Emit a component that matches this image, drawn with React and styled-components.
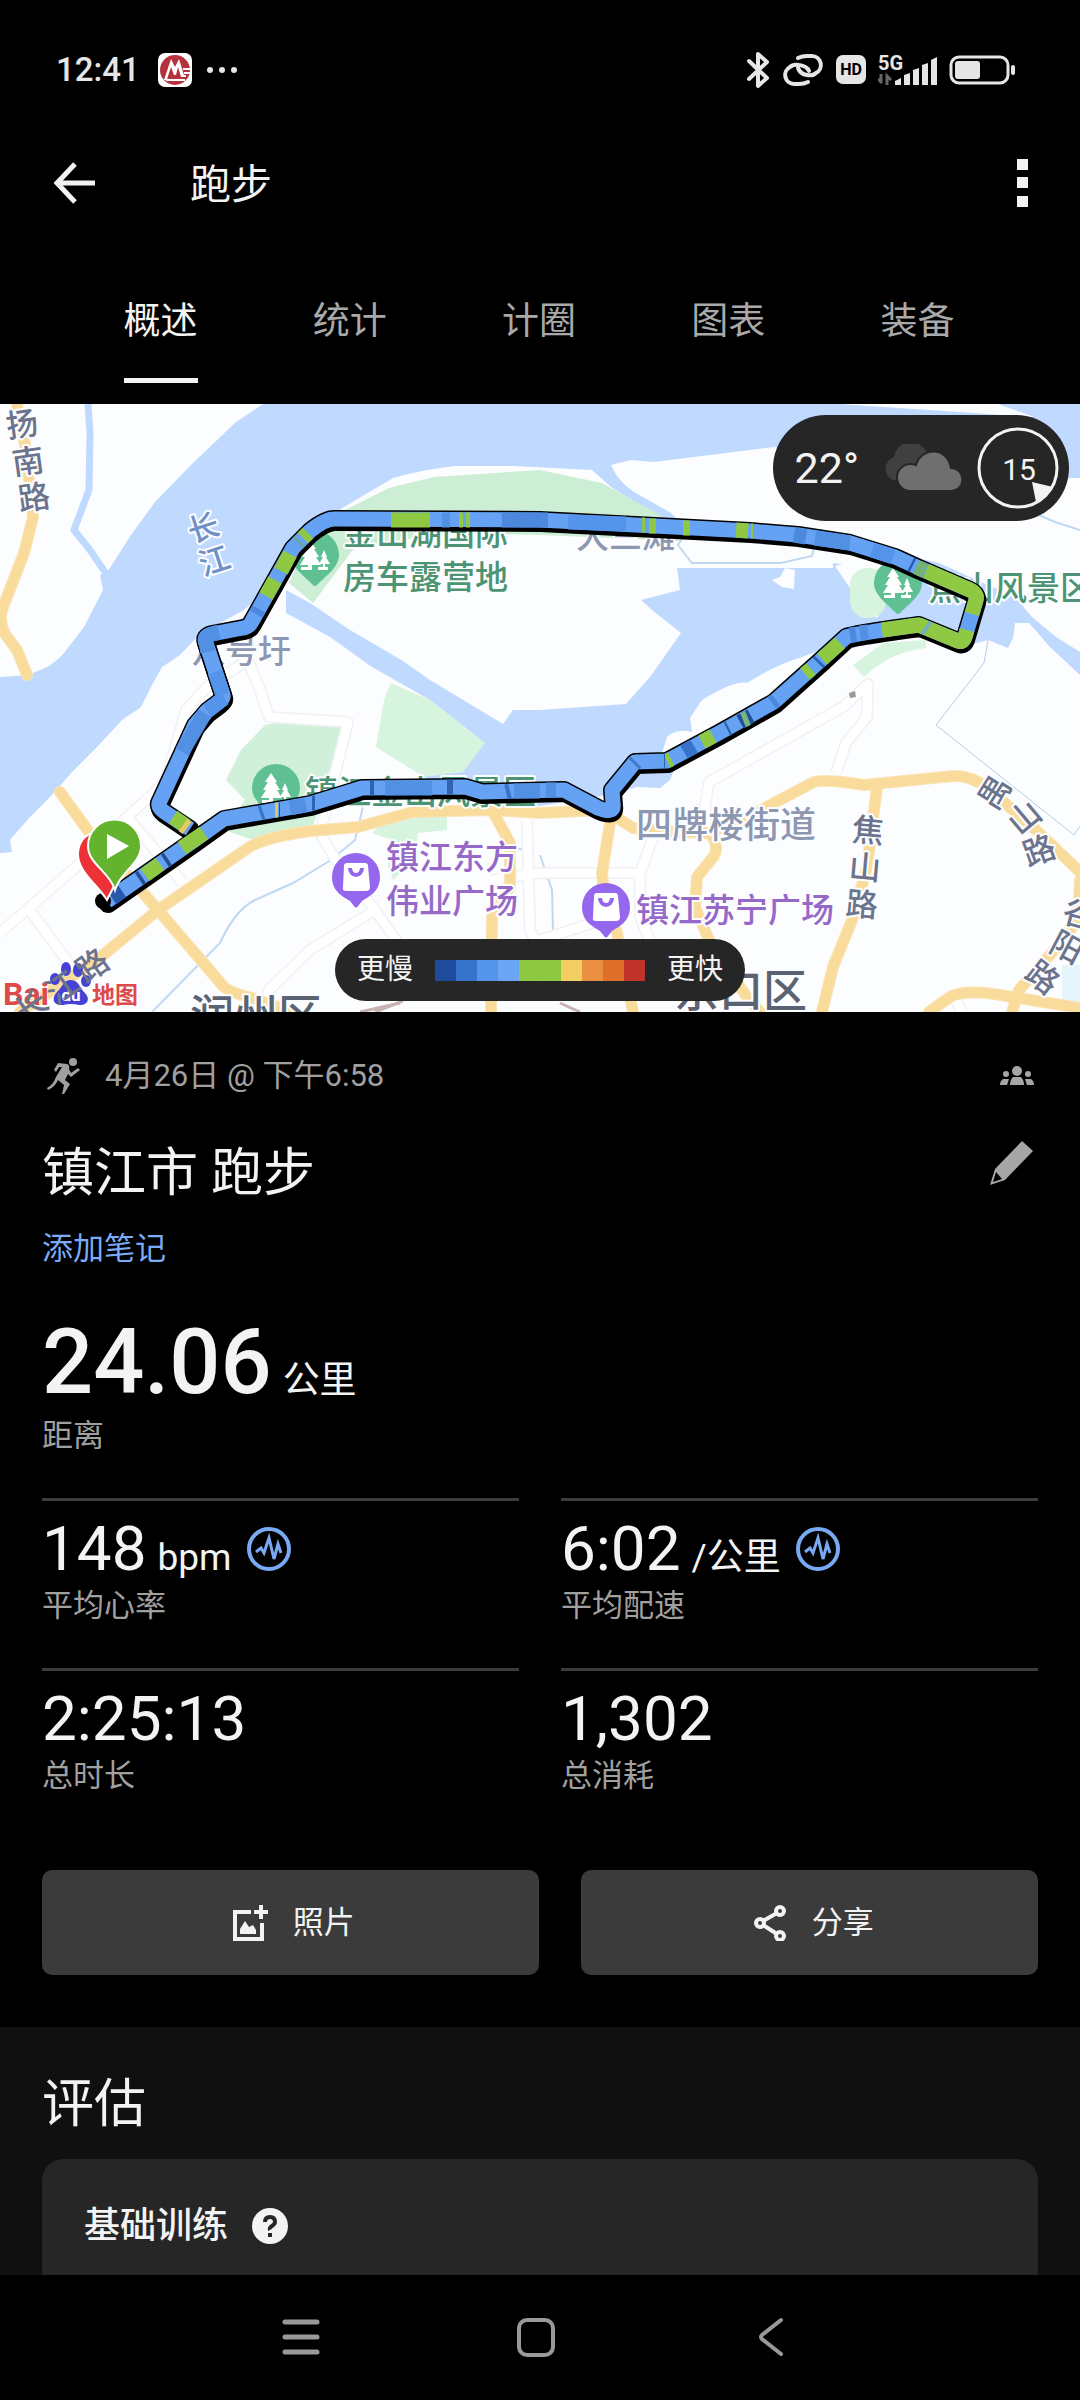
import styled, { createGlobalStyle } from "styled-components";
import { useState } from "react";

const GlobalStyle = createGlobalStyle`
    * {
        box-sizing: border-box;
    }
    body {
        margin: 0;
        background: #000;
        color: #f3f3f3;
        font-family: Roboto, "Noto Sans CJK SC", sans-serif;
    }
    button {
        margin: 0;
        padding: 0;
        border: none;
        background: none;
        color: inherit;
        font: inherit;
        cursor: pointer;
    }
    svg {
        display: block;
        flex: none;
    }
`;

const Page = styled.div`
    display: flex;
    flex-direction: column;
    min-height: 100vh;
`;

/* status bar */

const StatusBar = styled.div`
    display: flex;
    align-items: center;
    justify-content: space-between;
    height: 120px;
    padding: 20px 65px 0 56px;
    color: #e6e6e6;
`;

const StatusGroup = styled.div`
    display: flex;
    align-items: center;
    gap: ${(props) => props.$gap}px;
`;

const Clock = styled.span`
    margin-right: 4px;
    font-size: 33px;
    line-height: 40px;
    font-weight: 500;
`;

/* app bar */

const AppBar = styled.header`
    display: flex;
    align-items: center;
    height: 126px;
    padding: 0 51px 0 53px;
`;

const AppTitle = styled.h1`
    flex: 1;
    margin: 0 0 0 94px;
    padding-top: 4px;
    font-size: 41px;
    line-height: 48px;
    font-weight: 400;
`;

const Tabs = styled.nav`
    display: flex;
    padding: 52px 68px 21px 66px;
`;

const Tab = styled.button`
    flex: 1;
    display: flex;
    justify-content: center;
    font-size: 37px;
    line-height: 48px;
    color: ${(props) => (props.$active ? "#f3f3f3" : "#a9a9a9")};
`;

const TabLabel = styled.span`
    padding-bottom: 32px;
    border-bottom: 5px solid ${(props) => (props.$active ? "#f3f3f3" : "transparent")};
`;

/* map */

const MapArea = styled.section`
    position: relative;
    background: #fcfdff;
`;

const MapCanvas = styled.svg`
    width: 100%;
    height: 608px;
`;

const Weather = styled.div`
    position: absolute;
    top: 11px;
    right: 11px;
    display: flex;
    align-items: center;
    gap: 12px;
    height: 106px;
    padding: 0 10px 0 22px;
    border-radius: 53px;
    background: #262626;
`;

const Temperature = styled.span`
    margin-right: 10px;
    font-size: 43px;
    line-height: 48px;
`;

const Legend = styled.div`
    position: absolute;
    bottom: 11px;
    left: 50%;
    transform: translateX(-50%);
    display: flex;
    align-items: center;
    gap: 22px;
    height: 62px;
    padding: 0 22px;
    border-radius: 31px;
    background: #262626;
    font-size: 28px;
    line-height: 40px;
    white-space: nowrap;
`;

const Swatches = styled.div`
    display: flex;
`;

const Swatch = styled.span`
    width: 21px;
    height: 21px;
    background: ${(props) => props.$color};
`;

/* overview */

const Overview = styled.main`
    padding: 44px 42px 52px;
`;

const Row = styled.div`
    display: flex;
    align-items: center;
    justify-content: space-between;
`;

const DateLine = styled.div`
    display: flex;
    align-items: center;
    gap: 23px;
    padding-left: 4px;
    color: #a0a0a0;
    font-size: 31px;
    line-height: 40px;
`;

const IconSlot = styled.div`
    padding-right: 4px;
    color: #a6a6a6;
`;

const ActivityName = styled.h2`
    margin: 46px 0 23px;
    font-size: 52px;
    line-height: 64px;
    font-weight: 400;
`;

const IconButton = styled.button`
    padding: ${(props) => props.$pad || "0"};
    color: ${(props) => props.$color || "inherit"};
`;

const NoteLink = styled.a`
    display: block;
    width: max-content;
    margin-bottom: 46px;
    color: #7babf5;
    font-size: 31px;
    line-height: 40px;
    text-decoration: none;
`;

const Value = styled.div`
    display: flex;
    align-items: baseline;
    font-size: ${(props) => (props.$big ? 90 : 62)}px;
    line-height: ${(props) => (props.$big ? 96 : 72)}px;
    font-weight: ${(props) => (props.$big ? 500 : 400)};
    svg {
        align-self: center;
        margin-left: 14px;
    }
`;

const Unit = styled.span`
    margin-left: 11px;
    font-size: 37px;
    line-height: 48px;
    font-weight: 400;
`;

const Label = styled.div`
    padding-top: 1px;
    color: #a0a0a0;
    font-size: 31px;
    line-height: 40px;
`;

const Distance = styled.div`
    display: flex;
    flex-direction: column;
    gap: 4px;
    margin-bottom: 42px;
`;

const Stats = styled.div`
    display: grid;
    grid-template-columns: 1fr 1fr;
    column-gap: 42px;
`;

const Stat = styled.div`
    padding: 12px 0 42px;
    border-top: 3px solid #3c3c3c;
`;

const Actions = styled.div`
    display: flex;
    gap: 42px;
    margin-top: 32px;
`;

const Action = styled.button`
    flex: ${(props) => props.$grow} 1 0;
    display: flex;
    align-items: center;
    justify-content: center;
    gap: 24px;
    height: 105px;
    padding-left: 6px;
    border-radius: 10px;
    background: #3b3b3b;
    font-size: 31px;
    line-height: 40px;
`;

/* evaluation */

const Evaluation = styled.section`
    padding: 46px 42px 0;
    background: #101010;
`;

const SectionTitle = styled.h2`
    margin: 0 0 22px;
    font-size: 52px;
    line-height: 64px;
    font-weight: 400;
`;

const Card = styled.div`
    display: flex;
    align-items: center;
    gap: 23px;
    padding: 43px 42px 25px;
    border-radius: 21px 21px 0 0;
    background: #262626;
`;

const CardTitle = styled.h3`
    margin: 0;
    font-size: 36px;
    line-height: 48px;
    font-weight: 500;
`;

const SystemNav = styled.nav`
    display: flex;
    justify-content: center;
    height: 124px;
    padding-right: 9px;
    background: #000;
    color: #999;
`;

const NavButton = styled.button`
    display: flex;
    align-items: center;
    justify-content: center;
    width: 235px;
`;

const tabs = ["概述", "统计", "计圈", "图表", "装备"];

const paceColors = [
    "#1e4b9c",
    "#3873cb",
    "#5494ea",
    "#6ba6f6",
    "#8fc943",
    "#8fc943",
    "#f3ce63",
    "#ea9040",
    "#de6e2a",
    "#c0342b",
];

const stats = [
    { value: "148", unit: "bpm", label: "平均心率", chart: true },
    { value: "6:02", unit: "/公里", label: "平均配速", chart: true },
    { value: "2:25:13", label: "总时长" },
    { value: "1,302", label: "总消耗" },
];

const yellowRoads = [
    "M17 404 26 450 33 517 24 553 3 607Q-2 620 5 634L17 650 27 675",
    "M60 792 86 828 158 910 224 987Q230 992 248 997L293 1012",
    "M20 1012 103 955 158 910 248 848Q262 838 310 831L358 827 413 812 492 810 540 813 605 810 633 828 678 832 709 833Q720 845 714 856L697 877 695 907 712 947 747 997 760 1012",
    "M709 833 747 818 774 803 812 783Q820 778 864 785L953 776Q972 775 990 790L1036 830 1080 872",
    "M877 787 867 867 852 920 833 967 822 1012",
    "M611 817 602 873 605 900 617 933 633 1012",
    "M492 810 510 843 510 887 492 917 491 1012",
    "M929 1012 950 997Q965 988 1012 997L1080 1008",
    "M1012 1012 1019 990 1050 955 1078 920 1080 880",
];

const whiteRoads = [
    "M0 933 76 867 127 817 165 783 186 710 207 687 248 660",
    "M248 660 260 690 269 717 348 722 320 833 334 857 375 910 403 950",
    "M31 912 79 977",
    "M375 910 310 950 269 990 262 1012",
    "M127 817 183 883",
    "M527 820 530 930 545 960",
    "M492 880 540 873 640 873 654 835",
    "M707 833 705 807 709 782 843 707 868 684 867 717 846 743 836 773",
    "M640 873 640 917 654 950",
    "M540 940 602 920",
    "M955 998 962 1012",
];

const streams = [
    "M152 1012 220 943Q235 910 255 900L293 883 331 860 355 840 363 807",
    "M688 530 678 545 692 563 781 563 812 556 816 540",
    "M1039 515 1055 522 1080 530",
    "M540 855 552 890 553 930",
    "M510 848 530 850",
];

const boundary = "M988 640 984 663 936 725 1074 835 1080 826";

const routePath =
    "M107 901 193 841 224 819 310 804 362 788 465 787 482 792 564 790 598 808Q615 815 613 803L612 790 635 762 667 761 719 733 774 702 821 660 846 637Q852 634 919 625L958 641Q963 643 965 637L976 600Q978 594 970 590L919 568 895 557 850 543 798 535 750 531 540 520 334 519Q325 519 310 531L293 548 251 623Q249 627 243 628L212 634Q203 636 206 643L223 695Q224 698 219 702L207 711 195 725 159 803Q158 807 163 811L190 829";

// short stretches where the pace differs from the base colour
const paceMarks = [
    ["#8fc943", "391 520 430 520"],
    ["#8fc943", "459 520 463 520"],
    ["#8fc943", "466 520 470 520"],
    ["#4c89de", "502 520 548 520"],
    ["#5290e4", "442 520 450 520"],
    ["#5494ea", "568 522 626 524"],
    ["#8fc943", "642 525 645 525"],
    ["#8fc943", "649 526 656 526"],
    ["#8fc943", "683 528 690 528"],
    ["#8fc943", "736 530 748 531"],
    ["#8fc943", "751 531 753 531"],
    ["#4c89de", "794 535 806 537"],
    ["#5290e4", "815 538 850 543"],
    ["#5494ea", "872 550 893 557"],
    ["#2058b0", "911 564 913 565"],
    ["#74b373", "916 567 925 571"],
    ["#8fc943", "926 571 970 590Q978 594 976 600L972 614"],
    ["#8fc943", "967 630 965 637Q963 643 958 641L919 625 882 630"],
    ["#72aec5", "925 627 928 629"],
    ["#4c89de", "850 635 856 634"],
    ["#5290e4", "860 633 868 632"],
    ["#8fc943", "840 643 822 659"],
    ["#2d63b4", "820 661 818 663"],
    ["#8fc943", "811 669 805 674"],
    ["#4c89de", "776 700 772 703"],
    ["#244f9a", "751 716 740 722"],
    ["#76b785", "748 718 743 720"],
    ["#2d63b4", "729 728 727 729"],
    ["#8fc943", "713 736 702 742"],
    ["#3873cb", "694 746 684 752"],
    ["#8fc943", "671 759 667 761"],
    ["#2d63b4", "665 761 664 761"],
    ["#3d78cc", "636 762 634 764"],
    ["#5290e4", "546 790 556 790"],
    ["#3873cb", "506 792 510 791"],
    ["#5290e4", "514 791 540 791"],
    ["#3464b0", "447 787 453 787"],
    ["#5290e4", "385 788 432 788"],
    ["#2d63b4", "370 788 374 788"],
    ["#2d63b4", "312 803 315 803"],
    ["#5290e4", "290 808 306 805"],
    ["#d7c95b", "275 810 278 810"],
    ["#244f9a", "279 810 280 810"],
    ["#3873cb", "260 813 263 812"],
    ["#8fc943", "204 833 182 848"],
    ["#254f94", "168 859 165 861"],
    ["#8fc943", "160 864 145 875"],
    ["#254f94", "142 877 139 879"],
    ["#2858ac", "122 891 112 898"],
    ["#8fc943", "173 817 186 826"],
    ["#e9cb5c", "183 825 187 828"],
    ["#8fc943", "308 533 303 538"],
    ["#6ba6a0", "300 541 298 543"],
    ["#8fc943", "290 554 281 571"],
    ["#8fc943", "275 580 266 596"],
    ["#4c89de", "259 609 256 614"],
    ["#5290e4", "219 632 212 634Q203 636 206 643L208 652"],
    ["#5494ea", "215 672 223 695"],
    ["#5290e4", "205 713 182 752"],
    ["#5494ea", "224 698 207 711"],
];

function StatusIcons() {
    return (
        <StatusGroup $gap={12}>
            <svg width="24" height="38" viewBox="0 0 24 38" fill="none" stroke="currentColor" strokeWidth="4" strokeLinecap="round" strokeLinejoin="round">
                <path d="M3 10 21 27 12 35V3L21 11 3 28" />
            </svg>
            <svg width="42" height="34" viewBox="0 0 42 34" fill="none" stroke="currentColor" strokeWidth="4" strokeLinecap="round">
                <path d="M16 5Q20 3 25 3H30A9 9 0 0 1 34 20Q31 23 25 22 18 21 16 15" />
                <path d="M26 29Q22 31 17 31H12A9 9 0 0 1 8 14Q11 11 17 12 25 13 27 18" />
            </svg>
            <svg width="30" height="30" viewBox="0 0 30 30">
                <rect width="30" height="29" rx="7" fill="currentColor" />
                <text x="15" y="20" fontSize="16" fontWeight="700" fill="#000" textAnchor="middle">HD</text>
            </svg>
            <svg width="59" height="36" viewBox="0 0 59 36" fill="currentColor">
                <text x="0" y="18" fontSize="20" fontWeight="700">5G</text>
                <path d="M3 22v9M0 27l4 4M9 33v-9l4 4" fill="none" stroke="#666" strokeWidth="3" />
                <path d="M17 33v-4l6-3v7zM26 33V23l6-2v12zM35 33V18l6-2v17zM44 33V13l6-2v22zM53 33V8l6-3v28z" />
            </svg>
            <svg width="66" height="30" viewBox="0 0 66 30">
                <rect x="2" y="2" width="57" height="26" rx="8" fill="none" stroke="currentColor" strokeWidth="3" />
                <rect x="6" y="6" width="25" height="18" rx="3" fill="currentColor" />
                <rect x="62" y="10" width="4" height="10" rx="2" fill="currentColor" />
            </svg>
        </StatusGroup>
    );
}

function TreePin({ x, y }) {
    return (
        <g transform={`translate(${x} ${y})`}>
            <path d="M-24 0A24 24 0 1 1 24 0C24 12 12 20 3 29Q0 33-3 29C-12 20-24 12-24 0Z" fill="#5fc193" />
            <path d="M-5-15 1-6H-1L4 2H1L6 10H-3V15H3V12H8V9H4L8 2H6L9-5 12 2H11L15 9H10V12H13V15H-14V12H-7V10H-15L-10 2H-13L-8-6H-11Z" fill="#fff" />
        </g>
    );
}

function ShopPin({ x, y }) {
    return (
        <g transform={`translate(${x} ${y})`}>
            <path d="M-24 0A24 24 0 1 1 24 0C24 15 12 20 6 24L2 29Q0 32-2 29L-6 24C-12 20-24 15-24 0Z" fill="#9567ee" />
            <path d="M-9-14H9Q12-14 12-11L14 10Q14 14 10 14H-10Q-14 14-13 10L-12-11Q-12-14-9-14Z" fill="#fff" />
            <path d="M-6-9A6 7 0 0 0 6-9" fill="none" stroke="#9567ee" strokeWidth="4" />
        </g>
    );
}

function RoadLabel({ chars, color = "#6b748c", size = 32 }) {
    return chars.map(([char, x, y, angle]) => (
        <text
            key={char}
            transform={`translate(${x} ${y}) rotate(${angle})`}
            y="12"
            textAnchor="middle"
            fontSize={size}
            fontWeight="500"
            fill={color}
        >
            {char}
        </text>
    ));
}

function RouteMap() {
    return (
        <MapCanvas viewBox="0 404 1080 608" preserveAspectRatio="xMidYMid slice" role="img" aria-label="跑步路线">
            <rect x="0" y="404" width="1080" height="608" fill="#fcfdff" />

            <g fill="#bfd9ff">
                <path d="M263 404 236 422 193 463 155 502 131 535 108 571 100 575 103 590 84 627 64 653Q54 664 45 668L28 675 0 677V853L12 852 10 840 30 817 52 795 72 772 98 746 122 720 141 707 152 685 162 667 180 655 196 638 220 623 244 610 268 590 286 560 310 531 344 507 393 478Q420 470 455 466H515L592 470 611 487 640 505 671 535 690 531 671 513 643 497Q620 486 611 465L631 460 654 462 726 453 774 447 900 478H1080V404Z" />
                <path d="M286 590 310 603 350 630 403 661 430 680 503 724 513 710H540L626 704 650 677 681 633 652 610 641 600 680 590 677 568H833V563L850 565 852 607 877 618 912 557 939 563 981 582 1015 597 1032 617 1056 637 1080 652V675L1050 647 1029 623 1015 623 1013 638 1008 648 988 640 962 647 925 636 884 640 840 643 802 657Q775 665 747 683 735 680 702 700L690 718 692 732Q676 728 667 737L662 753 674 770 670 780 660 788 636 787 619 793 540 806 463 795 424 777 463 765 485 743 430 700 372 667 330 637 286 613Z" />
            </g>
            <path d="M88 404 90 433 89 490 74 530 90 550 107 575" fill="none" stroke="#bfd9ff" strokeWidth="7" />
            <path d="M840 404 1034 417 998 404Z" fill="#fcfdff" />
            <path d="M772 580 780 577 785 568 795 570 794 589 782 587Z" fill="#fcfdff" />
            <path d="M835 566 846 563 860 566 850 588Z" fill="#fcfdff" />

            <path d="M341 512 389 488 434 477 540 470 602 483 660 515 680 541 540 535 448 533 355 547 313 603 289 583 310 535Z" fill="#cbeed4" />
            <g fill="#d7f4de">
                <path d="M391 683 430 700 485 743 463 772 424 777 376 747 384 700Z" />
                <rect x="850" y="568" width="36" height="50" rx="17" />
                <path d="M884 643 926 640V648Q890 652 864 677L853 665Z" />
                <path d="M372 833 389 817 447 815V830L418 833 414 862 393 880 388 866 392 840Z" />
            </g>
            <path d="M265 725 289 720 341 727 320 807 310 833Q280 835 262 843L224 830 245 800 226 780 241 750Z" fill="#d1f0d9" />
            <rect x="1062" y="965" width="18" height="38" fill="#e4f6fb" />

            {streams.map((d) => (
                <path key={d} d={d} fill="none" stroke="#c0d8f0" strokeWidth="2" />
            ))}
            <path d={boundary} fill="none" stroke="#b4cfe6" />
            <g fill="none" strokeLinejoin="round">
                {whiteRoads.map((d) => (
                    <path key={d} d={d} stroke="#f0f1f4" strokeWidth="12" />
                ))}
                {whiteRoads.map((d) => (
                    <path key={d} d={d} stroke="#fff" strokeWidth="9" />
                ))}
                {yellowRoads.map((d) => (
                    <path key={d} d={d} stroke="#fbe5b8" strokeWidth="12" strokeLinecap="round" />
                ))}
                {yellowRoads.map((d) => (
                    <path key={d} d={d} stroke="#f9dc9c" strokeWidth="10" strokeLinecap="round" />
                ))}
            </g>
            <path d="M360 1012 400 1003M375 1012 403 1001M560 1003 580 1012" stroke="#c8b3b3" strokeWidth="3" />
            <path d="M849 693 855 691 856 697 850 698Z" fill="#999" />

            <TreePin x={315} y={555} />
            <TreePin x={898} y={583} />
            <TreePin x={276} y={788} />
            <ShopPin x={356} y={877} />
            <ShopPin x={606} y={907} />

            <g fontSize="33" fontWeight="500" stroke="#fcfdff" strokeWidth="4" strokeLinejoin="round" paintOrder="stroke">
                <g fill="#4c9474">
                    <text x="343" y="545">金山湖国际</text>
                    <text x="343" y="589">房车露营地</text>
                    <text x="305" y="804">镇江金山风景区</text>
                    <text x="928" y="600">焦山风景区</text>
                </g>
                <g fill="#8d97b2">
                    <text x="192" y="663">八号圩</text>
                    <text x="576" y="548">大三滩</text>
                    <text x="636" y="838" fontSize="36">四牌楼街道</text>
                </g>
                <g fill="#9669c8">
                    <text x="386" y="869">镇江东方</text>
                    <text x="386" y="913">伟业广场</text>
                    <text x="636" y="922">镇江苏宁广场</text>
                </g>
                <g fill="#5b6373" fontSize="44">
                    <text x="190" y="1032">润州区</text>
                    <text x="675" y="1007">京口区</text>
                </g>
                <RoadLabel chars={[["扬", 22, 424, -8], ["南", 28, 461, -8], ["路", 34, 497, -8]]} />
                <RoadLabel chars={[["长", 203, 527, -18], ["江", 214, 560, -18]]} color="#6f90c4" size={31} />
                <RoadLabel chars={[["焦", 868, 830, 5], ["山", 865, 867, 5], ["路", 862, 904, 5]]} />
                <RoadLabel chars={[["禺", 994, 792, -58], ["山", 1024, 817, -40], ["路", 1039, 850, -20]]} />
                <RoadLabel chars={[["谷", 1079, 914, 15], ["阳", 1067, 947, 28], ["路", 1043, 977, 38]]} />
            </g>

            <g fontWeight="700">
                <text x="3" y="1005" fontSize="32" fill="#dd4a4c" stroke="#fff" strokeWidth="2" paintOrder="stroke">Bai</text>
                <g fill="#4541d6">
                    <ellipse cx="55" cy="979" rx="5" ry="6" />
                    <ellipse cx="66" cy="969" rx="5" ry="7" />
                    <ellipse cx="78" cy="970" rx="5" ry="7" />
                    <ellipse cx="86" cy="981" rx="5" ry="6" />
                    <path d="M71 980C79 980 80 989 85 993 91 999 87 1006 79 1005Q71 1003 63 1005C53 1006 51 998 57 992 62 988 63 980 71 980Z" />
                </g>
                <text x="71" y="1001" fontSize="17" fill="#fff" textAnchor="middle">du</text>
                <text x="92" y="1003" fontSize="23" fill="#dd4a4c" stroke="#fff" strokeWidth="2" paintOrder="stroke">地图</text>
            </g>
            <RoadLabel chars={[["长", 31, 1006, -35], ["江", 62, 987, -35], ["路", 92, 965, -35]]} />

            <g fill="none" strokeLinejoin="round">
                <path d={routePath} stroke="#000" strokeWidth="18" strokeLinecap="round" />
                <path d={routePath} stroke="#000" strokeWidth="18" strokeLinecap="round" transform="translate(1 3)" />
                <path d={routePath} stroke="#65a2f4" strokeWidth="15" />
                {paceMarks.map(([color, d]) => (
                    <path key={d} d={`M${d}`} stroke={color} strokeWidth="15" />
                ))}
            </g>
            <circle cx="103" cy="901" r="8" />

            <g stroke="#fff" strokeWidth="2">
                <path d="M107 900C97 884 77 871 78 853 79 840 87 832 100 832L122 870Z" fill="#ec3237" />
                <path d="M115 890C110 872 88 864 88 846A26 26 0 0 1 141 846C141 864 120 872 115 890Z" fill="#63b32e" />
            </g>
            <path d="M107 834 129 846 107 859Z" fill="#fff" />
        </MapCanvas>
    );
}

function WeatherPill() {
    return (
        <Weather>
            <Temperature>22°</Temperature>
            <svg width="84" height="48" viewBox="0 0 84 48">
                <path d="M12 36A11 12 0 0 1 13 13 17 17 0 0 1 46 10L38 36Z" fill="#404040" />
                <path d="M29 47A13 13 0 0 1 30 20Q33 20 35 21C40 3 66 2 70 24A11 11 0 0 1 70 47Z" fill="#6f6f6f" stroke="#262626" strokeWidth="2" />
            </svg>
            <svg width="82" height="82" viewBox="0 0 82 82" fill="#f3f3f3">
                <circle cx="41" cy="41" r="39" fill="none" stroke="#f3f3f3" strokeWidth="3" />
                <path d="M55 55 76 60 70 68 59 75Z" />
                <text x="42" y="53" fontSize="30" textAnchor="middle">15</text>
            </svg>
        </Weather>
    );
}

function PulseIcon() {
    return (
        <svg width="46" height="46" viewBox="0 0 46 46" fill="none" stroke="#78a9f2">
            <circle cx="23" cy="23" r="20" strokeWidth="4" />
            <path d="M10 26 15 22 18 27 23 12 28 33 32 18 35 27" strokeWidth="3" />
        </svg>
    );
}

export default function App() {
    const [activeTab, setActiveTab] = useState("概述");

    return (
        <Page>
            <GlobalStyle />
            <StatusBar>
                <StatusGroup $gap={14}>
                    <Clock>12:41</Clock>
                    <svg width="34" height="34" viewBox="0 0 34 34">
                        <rect width="34" height="34" rx="7" fill="#fff" />
                        <circle cx="17" cy="17" r="15" fill="#b5323c" />
                        <path d="M6 27 13 6 17 14 21 6 26 22H28V24H23L20 14 18 22H16L13 14 10 23 9 27Z" fill="#fff" />
                        <path d="M25 16H34M26 20H34M8 27H27" stroke="#fff" strokeWidth="2" />
                    </svg>
                    <svg width="32" height="8" viewBox="0 0 32 8" fill="currentColor">
                        <circle cx="4" cy="4" r="3" />
                        <circle cx="16" cy="4" r="3" />
                        <circle cx="28" cy="4" r="3" />
                    </svg>
                </StatusGroup>
                <StatusIcons />
            </StatusBar>

            <AppBar>
                <IconButton aria-label="返回">
                    <svg width="43" height="42" viewBox="0 0 43 42" fill="none" stroke="currentColor" strokeWidth="5">
                        <path d="M22 2 4 21 22 40M4 21H42" />
                    </svg>
                </IconButton>
                <AppTitle>跑步</AppTitle>
                <IconButton aria-label="更多">
                    <svg width="12" height="48" viewBox="0 0 12 48" fill="currentColor">
                        <path d="M0 0h11v11H0zM0 18h11v11H0zM0 37h11v11H0z" />
                    </svg>
                </IconButton>
            </AppBar>

            <Tabs>
                {tabs.map((tab) => (
                    <Tab key={tab} $active={tab === activeTab} onClick={() => setActiveTab(tab)}>
                        <TabLabel $active={tab === activeTab}>{tab}</TabLabel>
                    </Tab>
                ))}
            </Tabs>

            <MapArea>
                <RouteMap />
                <WeatherPill />
                <Legend>
                    更慢
                    <Swatches>
                        {paceColors.map((color, i) => (
                            <Swatch key={i} $color={color} />
                        ))}
                    </Swatches>
                    更快
                </Legend>
            </MapArea>

            <Overview>
                <Row>
                    <DateLine>
                        <svg width="36" height="38" viewBox="0 0 36 38" fill="currentColor">
                            <circle cx="27" cy="5" r="4" />
                            <path d="M12 6 21 7Q24 8 23 12L25 16 32 11 34 13 25 20 22 17 19 23 24 27 18 37H16L18 28 12 23Q9 30 2 33L1 31Q7 28 10 20L16 10H13L10 15 8 13Z" />
                        </svg>
                        4月26日 @ 下午6:58
                    </DateLine>
                    <IconSlot>
                        <svg width="34" height="20" viewBox="0 0 34 20" fill="currentColor">
                            <circle cx="17" cy="5" r="5" />
                            <circle cx="6" cy="8" r="3" />
                            <circle cx="28" cy="8" r="3" />
                            <path d="M13 11h8q3 3 3 8H10q0-5 3-8zM3 13h6l-2 6H0q0-4 3-6zM25 13h6q3 2 3 6h-7z" />
                        </svg>
                    </IconSlot>
                </Row>
                <Row>
                    <ActivityName>镇江市 跑步</ActivityName>
                    <IconButton $pad="0 5px 0 0" $color="#a6a6a6" aria-label="编辑">
                        <svg width="44" height="44" viewBox="0 0 44 44" fill="currentColor">
                            <path fillRule="evenodd" d="M33 0 44 10 16 39 1 44 6 28ZM7 31 4 41 13 38Z" />
                        </svg>
                    </IconButton>
                </Row>
                <NoteLink href="#note">添加笔记</NoteLink>
                <Distance>
                    <Value $big>
                        24.06<Unit>公里</Unit>
                    </Value>
                    <Label>距离</Label>
                </Distance>
                <Stats>
                    {stats.map((stat) => (
                        <Stat key={stat.label}>
                            <Value>
                                {stat.value}
                                {stat.unit && <Unit>{stat.unit}</Unit>}
                                {stat.chart && <PulseIcon />}
                            </Value>
                            <Label>{stat.label}</Label>
                        </Stat>
                    ))}
                </Stats>
                <Actions>
                    <Action $grow={12}>
                        <svg width="36" height="36" viewBox="0 0 36 36">
                            <path d="M18 7H2V34H29V18" fill="none" stroke="currentColor" strokeWidth="4" />
                            <path d="M28 0V14M21 7H35" stroke="currentColor" strokeWidth="4" />
                            <path d="M7 29V24L12 16 16 22 20 20 23 25V29Z" fill="currentColor" />
                        </svg>
                        照片
                    </Action>
                    <Action $grow={11}>
                        <svg width="36" height="36" viewBox="0 0 36 36" fill="none" stroke="currentColor" strokeWidth="4">
                            <circle cx="8" cy="18" r="4" />
                            <circle cx="28" cy="6" r="4" />
                            <circle cx="28" cy="31" r="4" />
                            <path d="M11 16 25 8M11 20 25 29" />
                        </svg>
                        分享
                    </Action>
                </Actions>
            </Overview>

            <Evaluation>
                <SectionTitle>评估</SectionTitle>
                <Card>
                    <CardTitle>基础训练</CardTitle>
                    <IconButton aria-label="帮助">
                        <svg width="38" height="38" viewBox="0 0 38 38">
                            <circle cx="19" cy="19" r="18" fill="currentColor" />
                            <path d="M14 15Q14 10 19 10T24 15Q24 17 21 19T19 23" fill="none" stroke="#262626" strokeWidth="4" />
                            <rect x="17" y="26" width="4" height="4" fill="#262626" />
                        </svg>
                    </IconButton>
                </Card>
            </Evaluation>

            <SystemNav>
                <NavButton aria-label="最近任务">
                    <svg width="38" height="38" viewBox="0 0 38 38" stroke="currentColor" strokeWidth="5" strokeLinecap="round">
                        <path d="M3 4H35M3 19H35M3 34H35" />
                    </svg>
                </NavButton>
                <NavButton aria-label="主屏幕">
                    <svg width="40" height="40" viewBox="0 0 40 40" fill="none" stroke="currentColor" strokeWidth="4">
                        <rect x="3" y="3" width="34" height="35" rx="8" />
                    </svg>
                </NavButton>
                <NavButton aria-label="返回上一页">
                    <svg width="26" height="40" viewBox="0 0 26 40" fill="none" stroke="currentColor" strokeWidth="4" strokeLinecap="round">
                        <path d="M23 3 4 18Q2 20 4 22L23 37" />
                    </svg>
                </NavButton>
            </SystemNav>
        </Page>
    );
}
